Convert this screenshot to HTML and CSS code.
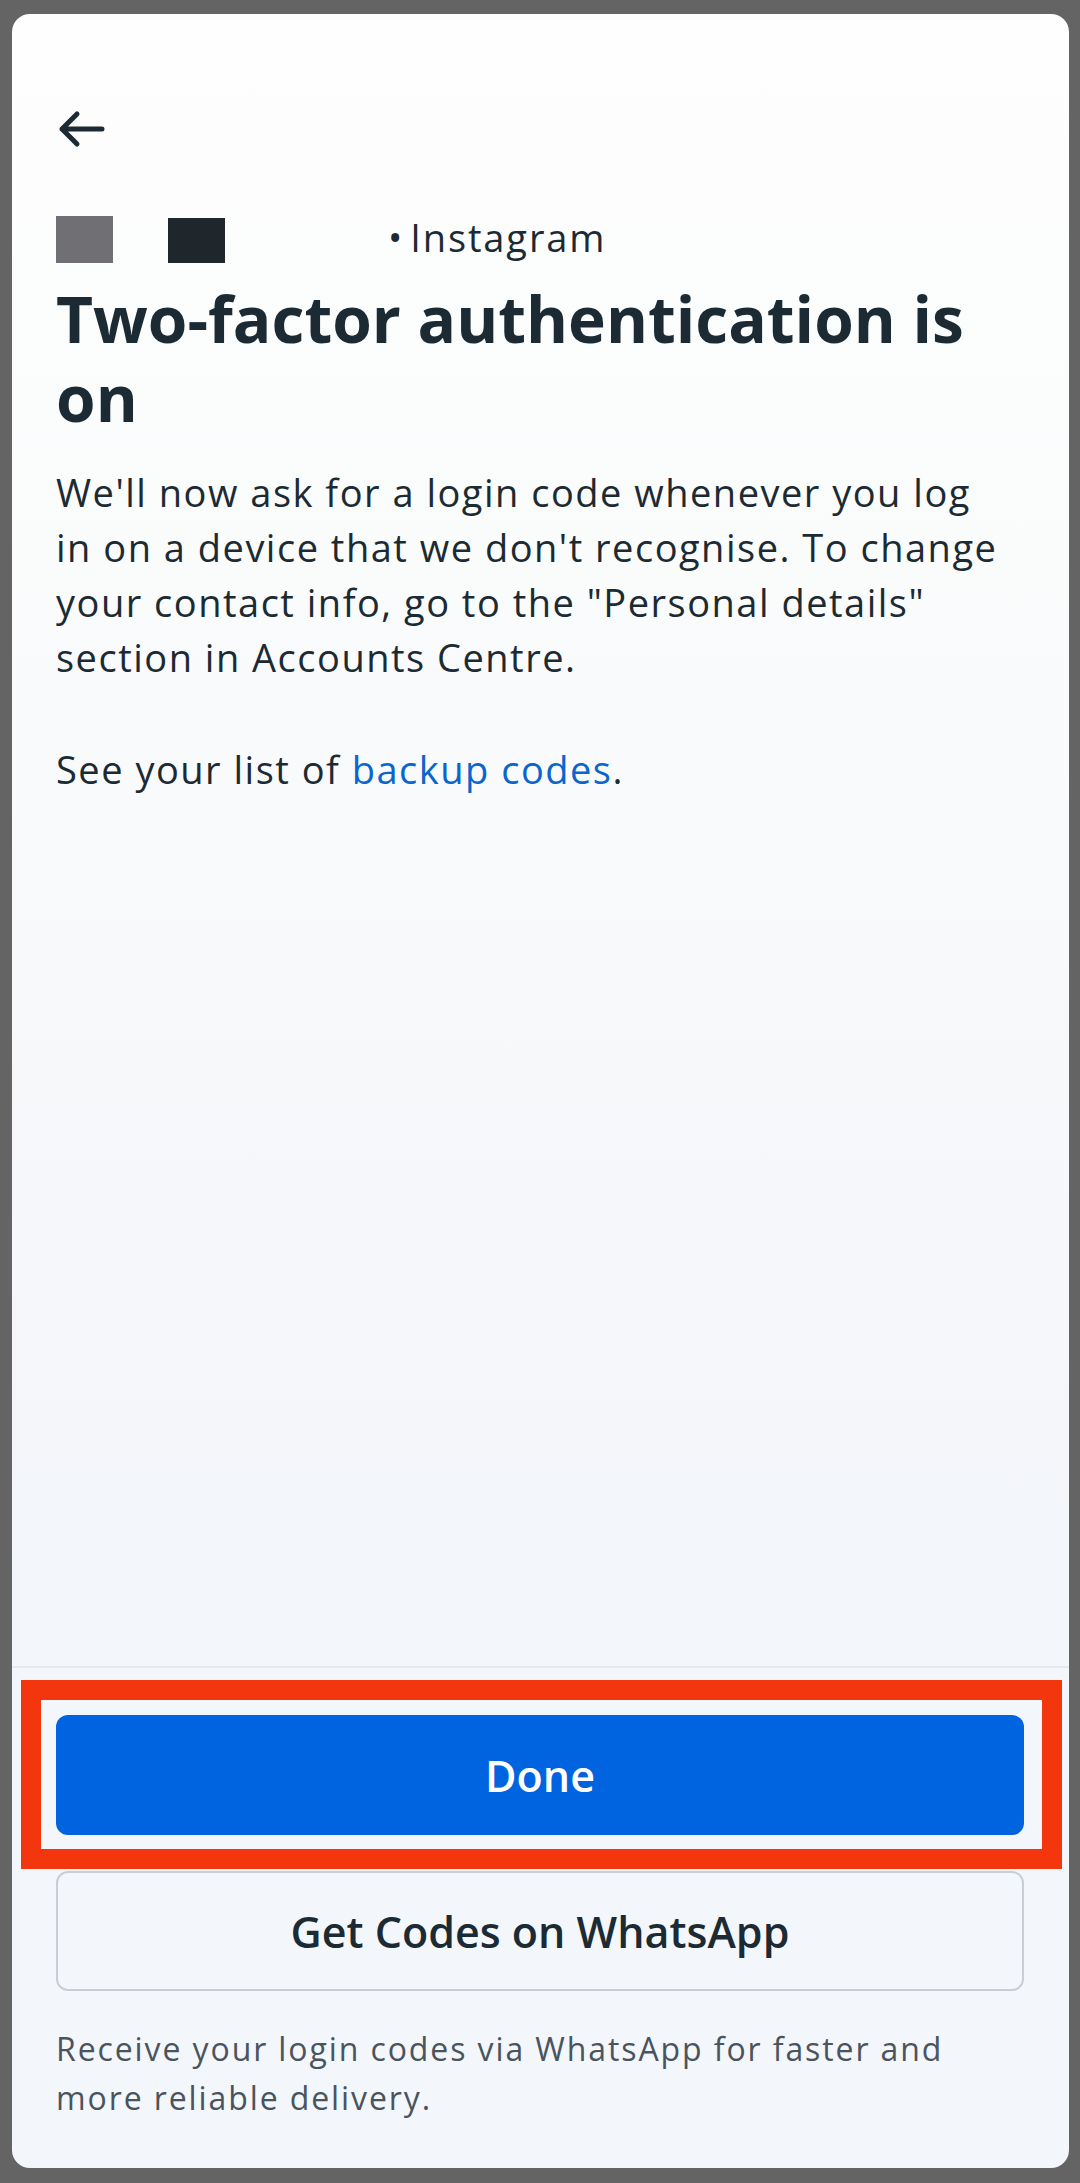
FILE: index.html
```html
<!DOCTYPE html>
<html lang="en">
<head>
<meta charset="utf-8">
<link rel="stylesheet" href="styles.css">
</head>
<body>
<div class="card">
  <div class="content">
    <div class="topbar">
      <svg class="back" width="48" height="38" viewBox="0 0 48 38"><path d="M5 19 H45 M20 4 L5 19 L20 34" fill="none" stroke="#1c2b33" stroke-width="5" stroke-linecap="round" stroke-linejoin="round"/></svg>
    </div>
    <div class="meta">
      <span class="redact gray"></span>
      <span class="redact dark"></span>
      <span class="source"><span class="dot">•</span>Instagram</span>
    </div>
    <h1 class="title">Two-factor authentication is on</h1>
    <p class="text">We'll now ask for a login code whenever you log in on a device that we don't recognise. To change your contact info, go to the "Personal details" section in Accounts Centre.</p>
    <p class="text">See your list of <a class="link">backup codes</a>.</p>
  </div>
  <div class="footer">
    <div class="highlight">
      <button class="btn primary">Done</button>
    </div>
    <button class="btn secondary">Get Codes on WhatsApp</button>
    <p class="note">Receive your login codes via WhatsApp for faster and more reliable delivery.</p>
  </div>
</div>
</body>
</html>
```

FILE: styles.css
```css
html, body {
  margin: 0;
  padding: 0;
}
body {
  background: #646464;
  padding: 14px 11px 15px 12px;
  font-family: "Open Sans", Roboto, sans-serif;
  color: #1c2b33;
}
.card {
  height: 2154px;
  box-sizing: border-box;
  border-radius: 18px;
  background: linear-gradient(180deg, #fdfefd 0%, #f9fafb 35%, #f4f6fa 65%, #f3f6fb 100%);
  display: flex;
  flex-direction: column;
  overflow: hidden;
}
.content {
  padding: 0 45px 0 44px;
}
.topbar {
  padding-top: 96px;
  height: 38px;
}
.back {
  display: block;
  margin-left: 1px;
}
.meta {
  display: flex;
  align-items: flex-start;
  height: 64px;
  margin-top: 67px;
}
.redact {
  display: block;
  width: 57px;
  flex: none;
}
.redact.gray {
  background: #707074;
  height: 47px;
  margin-top: 1px;
}
.redact.dark {
  background: #1f262c;
  height: 45px;
  margin-top: 3px;
  margin-left: 55px;
}
.source {
  font-size: 38px;
  line-height: 44px;
  letter-spacing: 1.9px;
  margin-left: 163px;
}
.dot {
  margin-right: 6px;
}
.title {
  margin: 0;
  font-size: 64px;
  line-height: 79px;
  font-weight: 700;
}
.text {
  margin: 28px 0 0;
  padding-right: 14px;
  font-size: 38px;
  line-height: 55px;
  letter-spacing: 1.5px;
}
.text + .text {
  margin-top: 57px;
}
.link {
  color: #0a66cc;
}
.footer {
  margin-top: auto;
  border-top: 2px solid #e6e8ec;
  padding: 47px 45px 46px 44px;
  display: flex;
  flex-direction: column;
}
.highlight {
  margin: -35px -38px -34px -35px;
  padding: 15px 18px 14px 15px;
  border: 20px solid #f4360f;
}
.btn {
  display: block;
  box-sizing: border-box;
  width: 100%;
  height: 120px;
  border-radius: 12px;
  font-family: "Open Sans", Roboto, sans-serif;
  font-size: 43px;
  font-weight: 600;
}
.primary {
  background: #0064e0;
  color: #fff;
  border: none;
}
.secondary {
  margin-top: 36px;
  background: transparent;
  color: #1c2b33;
  border: 2px solid #c9ced4;
}
.note {
  margin: 33px 0 0;
  font-size: 32px;
  line-height: 49px;
  letter-spacing: 1.9px;
  color: #4a545e;
}
```
